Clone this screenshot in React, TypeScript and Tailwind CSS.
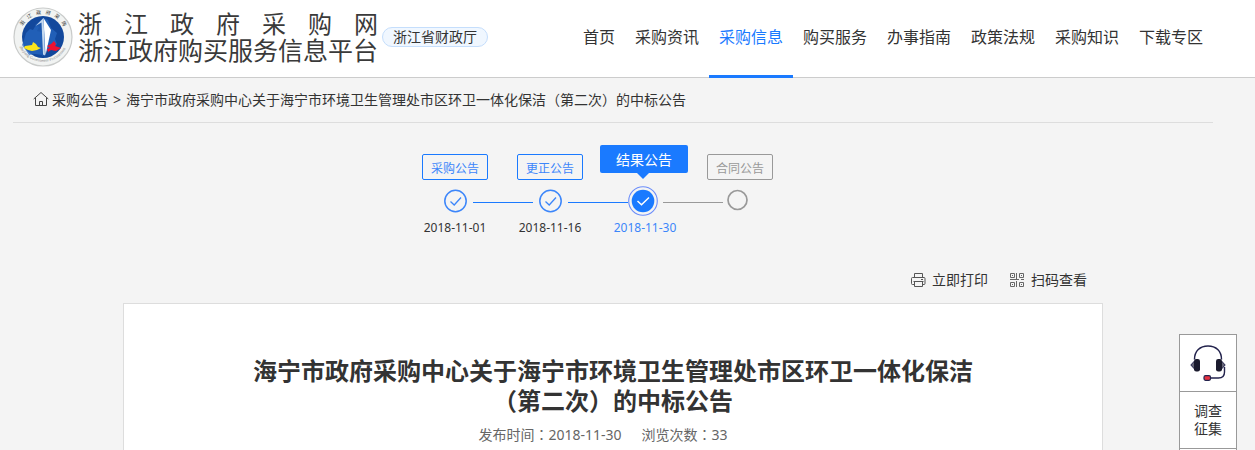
import clsx from "clsx";

type Step = {
  label: string;
  date?: string;
  state: "done" | "active" | "pending";
};

const navItems = [
  "首页",
  "采购资讯",
  "采购信息",
  "购买服务",
  "办事指南",
  "政策法规",
  "采购知识",
  "下载专区",
];

const steps: Step[] = [
  { label: "采购公告", date: "2018-11-01", state: "done" },
  { label: "更正公告", date: "2018-11-16", state: "done" },
  { label: "结果公告", date: "2018-11-30", state: "active" },
  { label: "合同公告", state: "pending" },
];

function Logo() {
  return (
    <svg viewBox="0 0 60 60" className="h-[60px] w-[60px] shrink-0" aria-hidden="true">
      <defs>
        <path id="ring-top" d="M7 30a23 23 0 0 1 46 0" />
        <path id="ring-bottom" d="M4.2 32a26 26 0 0 0 51.6 0" />
      </defs>
      <circle cx="30" cy="30" r="29" fill="#f1f3f2" stroke="#c9cbca" strokeWidth="1.2" />
      <circle cx="30" cy="30" r="21" fill="#12489c" />
      <path
        d="M13 26l4-4 3 1 3-5 4-2 3-5 5 2 3 8 6 5-2 6 2 5-5 5-6 2-3 4-8-1-6 1-4-6-3-4 2-5z"
        fill="#2767c0"
        opacity=".75"
      />
      <path d="M30.500 11L22 18l4 2-2 4 5 1v24l3-1z" fill="#1d58ae" />
      <path d="M30.500 11l7.500 12-5.500 25.500z" fill="#fff" />
      <path d="M30.500 11l-8 8 6-3.500 1.500 32 2 1z" fill="#c5d9ef" />
      <path d="M12 39l7-1 1-3 3 2 2 3 3 1-4 2-5 1-4-1-4-2z" fill="#fbe51c" />
      <path d="M34 39l4-2 3-3 2 3-1 2 6 2-5 3-5-1-3 2-1-3 3-1z" fill="#ee1130" />
      <text fontSize="5" fill="#333" letterSpacing="4" fontFamily="Noto Sans CJK SC, sans-serif">
        <textPath href="#ring-top" startOffset="11">
          浙江政府采购
        </textPath>
      </text>
      <text fontSize="4" fill="#888" fontFamily="Liberation Serif, serif">
        <textPath href="#ring-bottom" startOffset="8">
          Zhejiang Government Procurement
        </textPath>
      </text>
    </svg>
  );
}

function HomeIcon() {
  return (
    <svg viewBox="0 0 16 16" fill="none" stroke="#444" className="h-4 w-4" aria-hidden="true">
      <path d="M.700 7L8 .500 15.300 7M2.500 5.800v7.700h11V5.800M6.500 13.500v-4h3v4" strokeLinejoin="round" />
    </svg>
  );
}

function PrinterIcon() {
  return (
    <svg viewBox="0 0 16 16" fill="none" stroke="#555" className="h-4 w-4" aria-hidden="true">
      <path d="M4.500 5.500v-4h8v4M4.500 12.500h-2a1 1 0 0 1-1-1v-5a1 1 0 0 1 1-1h11.500a1 1 0 0 1 1 1v5a1 1 0 0 1-1 1h-1.500M4.500 9.500h8v5h-8zM3.500 9.500h10M11 7.500h2" />
    </svg>
  );
}

function QrIcon() {
  return (
    <svg viewBox="0 0 16 16" fill="none" stroke="#666" className="h-4 w-4" aria-hidden="true">
      <path d="M1.500 1.500h4v4h-4zM10.500 1.500h4v4h-4zM1.500 10.500h4v4h-4zM10.500 10.500h4v4h-4z" />
      <path d="M3 3.500h1M12 3.500h1M3 12.500h1M12 12.500h1M7.500 1v6M1 7.500h9M12 7.500h3M7.500 9v6" />
    </svg>
  );
}

function HeadsetIcon() {
  return (
    <svg viewBox="0 0 36 36" fill="none" className="h-9 w-9" aria-hidden="true">
      <path d="M4.500 14.500C4.500 6 10 1 18 1s13.500 5 13.500 13.500" stroke="#23234d" strokeWidth="1.500" />
      <path d="M4.500 16L.800 20l3.700 4zM31.500 16l3.700 4-3.700 4z" fill="#667" stroke="#23234d" />
      <rect x="4" y="14" width="6" height="12.500" rx="2.200" fill="#1b1b2e" />
      <rect x="26" y="14" width="6" height="12.500" rx="2.200" fill="#1b1b2e" />
      <path d="M34.500 22v5c0 4-2 6-6 6h-8" stroke="#23234d" strokeWidth="1.400" />
      <rect x="14" y="30.700" width="6.500" height="4.600" rx="1.500" fill="#e8323f" stroke="#23234d" strokeWidth="1.200" />
    </svg>
  );
}

function StepDot({ state }: { state: Step["state"] }) {
  return (
    <svg viewBox="0 0 35 32" fill="none" className="h-8 w-[35px] shrink-0" aria-hidden="true">
      {state === "done" && (
        <>
          <circle cx="17.500" cy="16" r="10.700" stroke="#3c86fa" strokeWidth="1.500" />
          <path d="M12.500 16.500l3.700 3.500 6.800-7.500" stroke="#3c86fa" strokeWidth="1.300" />
        </>
      )}
      {state === "active" && (
        <>
          <circle cx="15" cy="16" r="14.300" stroke="#6b8dfa" strokeWidth="1.100" />
          <circle cx="15" cy="16" r="11.300" fill="#1a7aff" />
          <path d="M9.500 16l4 3.700 7.500-7.200" stroke="#fff" strokeWidth="1.500" />
        </>
      )}
      {state === "pending" && (
        <circle cx="14.500" cy="15" r="9.500" stroke="#999" strokeWidth="1.700" />
      )}
    </svg>
  );
}

function StepItem({ step, nextState }: { step: Step; nextState?: Step["state"] }) {
  const active = step.state === "active";
  return (
    <li className={nextState ? "w-[95px]" : "w-[66px]"}>
      <div className="flex h-10 items-start">
        {active ? (
          <a
            href="#result"
            className="relative -ml-3 h-7 w-[88px] shrink-0 rounded-xs bg-[#1a7aff] text-center text-sm leading-[30px] text-white"
          >
            {step.label}
            <span className="absolute top-full left-[37px] border-x-6 border-t-6 border-x-transparent border-t-[#1a7aff]" />
          </a>
        ) : (
          <a
            href="#notice"
            className={clsx(
              "mt-[9px] h-[26px] w-[66px] rounded-xs border text-center text-xs leading-7",
              step.state === "done"
                ? "border-[#1a7aff] text-[#3c86fa]"
                : "border-[#999] text-[#999]"
            )}
          >
            {step.label}
          </a>
        )}
      </div>
      <div className="ml-4 flex w-[95px] items-center">
        <StepDot state={step.state} />
        {nextState && (
          <span
            className={clsx(
              "mt-[3px] h-px w-[60px]",
              nextState === "pending" ? "bg-[#999]" : "bg-[#1a7aff]"
            )}
          />
        )}
      </div>
      <p
        className={clsx(
          "h-[22px] w-[66px] text-center text-xs leading-[22px]",
          active ? "text-[#3c86fa]" : "text-[#333]"
        )}
      >
        {step.date}
      </p>
    </li>
  );
}

// Centred full-width colon, as the Traditional Chinese face draws it.
function Colon() {
  return (
    <span lang="zh-TW" className="font-['Noto_Sans_CJK_TC',sans-serif]">
      ：
    </span>
  );
}

export default function App() {
  return (
    <div
      lang="zh-CN"
      className="flex min-h-screen flex-col bg-[#f4f4f4] font-['Noto_Sans','Noto_Sans_CJK_SC',sans-serif] text-sm text-[#333]"
    >
      <header className="h-[78px] border-b border-[#ccc] bg-white pr-[29px]">
        <div className="mx-auto flex max-w-[1200px] items-start justify-between">
          <div className="flex items-center pt-[7px]">
            <Logo />
            <div className="ml-[5px] w-[300px] text-[#3a3a3a]">
              <p className="flex justify-between text-2xl leading-[26px]">
                {[..."浙江政府采购网"].map((char) => (
                  <span key={char}>{char}</span>
                ))}
              </p>
              <p className="text-[25px] leading-[26px] whitespace-nowrap">
                浙江政府购买服务信息平台
              </p>
            </div>
            <span className="ml-1 h-5 rounded-full border border-[#c5defc] bg-[#f0f7ff] px-[10px] leading-[18px] whitespace-nowrap">
              浙江省财政厅
            </span>
          </div>
          <nav className="flex">
            {navItems.map((item) => (
              <a
                key={item}
                href="#nav"
                className={clsx(
                  "h-[78px] border-b-3 px-[10px] text-base leading-[74px] whitespace-nowrap",
                  item === "采购信息"
                    ? "border-[#1a7aff] text-[#1a7aff]"
                    : "border-transparent"
                )}
              >
                {item}
              </a>
            ))}
          </nav>
        </div>
      </header>

      <main className="flex flex-1 flex-col pr-[29px]">
        <div className="mx-auto flex h-[45px] w-full max-w-[1200px] items-center border-b border-[#ddd] pl-5">
          <HomeIcon />
          <a href="#notices" className="ml-[3px]">
            采购公告
          </a>
          <span className="mx-[5px]">&gt;</span>
          <span>海宁市政府采购中心关于海宁市环境卫生管理处市区环卫一体化保洁（第二次）的中标公告</span>
        </div>

        <ol className="flex justify-center pt-[22px] pr-[31px]">
          {steps.map((step, i) => (
            <StepItem key={step.label} step={step} nextState={steps[i + 1]?.state} />
          ))}
        </ol>

        <div className="mx-auto flex w-full max-w-[980px] flex-1 flex-col pt-[31px]">
          <div className="flex justify-end gap-[21px] pr-4 pb-[13px]">
            <button type="button" className="flex items-center gap-[6px] leading-5">
              <PrinterIcon />
              立即打印
            </button>
            <button type="button" className="flex items-center gap-[6px] leading-5">
              <QrIcon />
              扫码查看
            </button>
          </div>
          <article className="flex-1 border border-b-0 border-[#ddd] bg-white pt-[52px] text-center">
            <h1 className="mx-auto max-w-[730px] text-2xl leading-[30px] font-bold">
              海宁市政府采购中心关于海宁市环境卫生管理处市区环卫一体化保洁
              <br />
              （第二次）的中标公告
            </h1>
            <p className="mt-2 flex justify-center gap-5 pr-5 leading-5 text-[#666]">
              <span>
                发布时间
                <Colon />
                2018-11-30
              </span>
              <span>
                浏览次数
                <Colon />
                33
              </span>
            </p>
          </article>
        </div>
      </main>

      <aside className="fixed top-[334px] right-[18px] w-[58px] border border-[#999] bg-white">
        <a href="#service" aria-label="客服" className="flex h-14 items-center justify-center">
          <HeadsetIcon />
        </a>
        <a
          href="#survey"
          className="flex h-[58px] items-center border-y border-[#999] px-[14px] leading-[18px]"
        >
          调查征集
        </a>
        <a href="#top" aria-label="返回顶部" className="block h-14" />
      </aside>
    </div>
  );
}
